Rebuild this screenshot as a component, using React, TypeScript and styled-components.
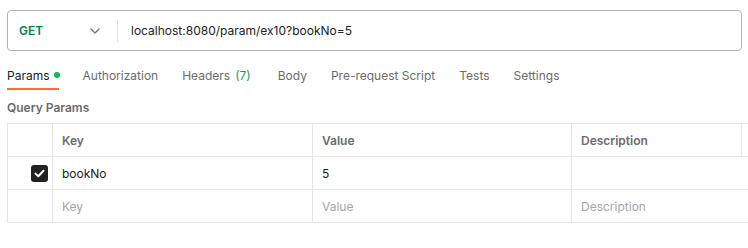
import React from "react";
import styled, { createGlobalStyle } from "styled-components";

const Global = createGlobalStyle`
  html, body { margin: 0; padding: 0; background: #ffffff; }
  body { font-family: Inter, "Noto Sans", Arial, sans-serif; -webkit-font-smoothing: antialiased; }
`;

const Page = styled.div`
  width: 748px;
  height: 248px;
  overflow: hidden;
  box-sizing: border-box;
  padding: 10px 0 0 7px;
`;

const UrlBar = styled.div`
  box-sizing: border-box;
  width: 735px;
  height: 41px;
  border: 1px solid #b5b5b5;
  border-radius: 4px;
  display: flex;
  align-items: center;
`;

const Method = styled.div`
  width: 109px;
  box-sizing: border-box;
  padding: 0 17px 0 11px;
  display: flex;
  align-items: center;
  justify-content: space-between;
  font-size: 12px;
  font-weight: 600;
  color: #0b7d50;
`;

const Divider = styled.div`
  width: 1px;
  height: 22px;
  background: #e3e3e3;
`;

const UrlText = styled.div`
  padding-left: 13px;
  font-size: 12px;
  color: #212121;
`;

const Tabs = styled.div`
  display: flex;
  gap: 24px;
  margin-top: 10px;
  height: 29px;
`;

const Tab = styled.div<{ $active?: boolean }>`
  box-sizing: border-box;
  height: 29px;
  display: flex;
  align-items: center;
  font-size: 12px;
  color: ${(p) => (p.$active ? "#212121" : "#6b6b6b")};
  border-bottom: 2px solid ${(p) => (p.$active ? "#ff6c37" : "transparent")};
  padding-top: 1px;
`;

const Count = styled.span`
  margin-left: 5px;
  margin-right: 3px;
  color: #1e9e4f;
`;

const Dot = styled.span`
  width: 6px;
  height: 6px;
  border-radius: 50%;
  background: #0cbb52;
  margin-left: 4px;
  margin-right: -1px;
`;

const SectionLabel = styled.div`
  margin-top: 10px;
  height: 16px;
  line-height: 16px;
  font-size: 12px;
  font-weight: 600;
  color: #6b6b6b;
  margin-bottom: 7px;
`;

const Table = styled.div`
  display: grid;
  grid-template-columns: 45px 260px 259px 170px 60px;
  width: 794px;
  border-top: 1px solid #e6e6e6;
  border-left: 1px solid #e6e6e6;
  box-sizing: border-box;
`;

const Cell = styled.div<{ $head?: boolean; $muted?: boolean; $span?: number }>`
  box-sizing: border-box;
  height: 33px;
  border-right: 1px solid #e6e6e6;
  border-bottom: 1px solid #e6e6e6;
  display: flex;
  align-items: center;
  padding-left: 9px;
  font-size: 12px;
  font-weight: ${(p) => (p.$head ? 600 : 400)};
  color: ${(p) => (p.$head ? "#6b6b6b" : p.$muted ? "#a6a6a6" : "#212121")};
  grid-column: span ${(p) => p.$span ?? 1};
`;

const CheckCell = styled(Cell)`
  justify-content: flex-end;
  padding: 0 4px 0 0;
`;

const Checkbox = styled.div`
  width: 17px;
  height: 17px;
  border-radius: 3px;
  background: #212121;
  display: flex;
  align-items: center;
  justify-content: center;
`;

const Chevron = () => (
  <svg width="10" height="6" viewBox="0 0 10 6" fill="none">
    <path d="M1 1l4 4 4-4" stroke="#6b6b6b" strokeWidth="1.1" strokeLinecap="round" strokeLinejoin="round" />
  </svg>
);

const Check = () => (
  <svg width="11" height="9" viewBox="0 0 11 9" fill="none">
    <path d="M1.5 4.6l2.8 2.7L9.5 1.8" stroke="#ffffff" strokeWidth="2" strokeLinecap="round" strokeLinejoin="round" />
  </svg>
);

export default function App() {
  return (
    <>
      <Global />
      <Page>
        <UrlBar>
          <Method>
            <span>GET</span>
            <Chevron />
          </Method>
          <Divider />
          <UrlText>localhost:8080/param/ex10?bookNo=5</UrlText>
        </UrlBar>
        <Tabs>
          <Tab $active>
            Params<Dot />
          </Tab>
          <Tab>Authorization</Tab>
          <Tab>
            Headers<Count>(7)</Count>
          </Tab>
          <Tab>Body</Tab>
          <Tab>Pre-request Script</Tab>
          <Tab>Tests</Tab>
          <Tab>Settings</Tab>
        </Tabs>
        <SectionLabel>Query Params</SectionLabel>
        <Table>
          <Cell $head />
          <Cell $head>Key</Cell>
          <Cell $head>Value</Cell>
          <Cell $head>Description</Cell>
          <Cell $head />

          <CheckCell>
            <Checkbox>
              <Check />
            </Checkbox>
          </CheckCell>
          <Cell>bookNo</Cell>
          <Cell>5</Cell>
          <Cell $span={2} />

          <Cell />
          <Cell $muted>Key</Cell>
          <Cell $muted>Value</Cell>
          <Cell $muted $span={2}>Description</Cell>
        </Table>
      </Page>
    </>
  );
}
